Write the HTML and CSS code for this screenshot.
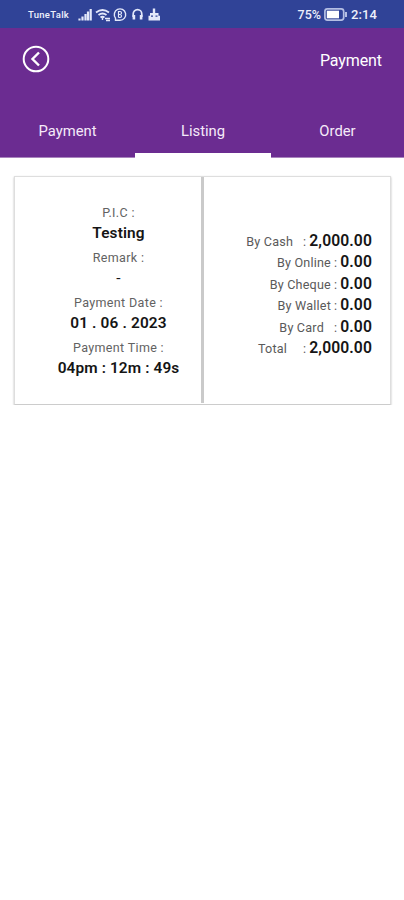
FILE: index.html
```html
<!DOCTYPE html>
<html lang="en">
<head>
<meta charset="utf-8">
<meta name="viewport" content="width=device-width, initial-scale=1">
<title>Payment</title>
<link rel="stylesheet" href="styles.css">
</head>
<body>
<div class="status">
  <span class="carrier">TuneTalk</span>
  <svg class="status-icons" width="84" height="16" viewBox="0 0 84 16" fill="none" stroke="#e3e8fa">
    <path d="M1.500 13.500v-2M4.500 13.500V9.500M7.500 13.500V7M10 13.500V4.500M12.700 13.500V2" stroke-width="2.200"/>
    <path d="M18 5.500q6.500-5 13 0M20.500 8q4-3 8 0M22.500 10.500q2-1.500 4 0" stroke-width="1.800"/>
    <path d="M24.500 10.500v2.500M27 11.500h5M28 13.500h4" stroke-width="1.400"/>
    <path d="M37.500 13.300H42a5.700 5.700 0 1 0-4.500-2.200z" stroke-width="1.400"/>
    <path d="M40.500 10.500v-6H42a1.500 1.500 0 0 1 0 3h-1.500M42 7.500a1.500 1.500 0 0 1 0 3h-1.500" stroke-width="1.200"/>
    <path d="M55.200 10V7a4.300 4.300 0 0 1 8.600 0v3" stroke-width="1.700"/>
    <path d="M55.900 8v4.500M63.100 8v4.500" stroke-width="2.600"/>
    <path d="M76 1.500v6" stroke-width="2.400"/>
    <path d="M72 6h8.500v3H72zM70.500 8.800h11.500v4.700H70.500z" fill="#e3e8fa" stroke="none"/>
    <path d="M73 9.200h2M77.500 9.200h2" stroke="#304397" stroke-width="1.300"/>
  </svg>
  <span class="percent">75%</span>
  <svg class="battery" width="24" height="13" viewBox="0 0 24 13">
    <rect x=".9" y=".9" width="18.800" height="11.200" rx="2.500" fill="none" stroke="#b5bfe3" stroke-width="1.700"/>
    <rect x="2.800" y="2.700" width="12.200" height="7.600" fill="#fff"/>
    <path d="M22 4v5" stroke="#b5bfe3" stroke-width="2"/>
  </svg>
  <span class="clock">2:14</span>
</div>
<header class="header">
  <div class="bar">
    <svg class="back" width="28" height="28" viewBox="0 0 28 28" fill="none" stroke="#fff" stroke-width="2">
      <circle cx="14" cy="14" r="12.300"/>
      <path d="M17 7.500 10.500 14l6.500 6.500" stroke-width="2.400"/>
    </svg>
    <h1 class="title">Payment</h1>
  </div>
  <nav class="tabs">
    <span class="tab">Payment</span>
    <span class="tab active">Listing</span>
    <span class="tab">Order</span>
  </nav>
</header>
<main class="card">
  <section class="details">
    <span class="label">P.I.C :</span>
    <b class="value">Testing</b>
    <span class="label">Remark :</span>
    <span class="value dash">-</span>
    <span class="label">Payment Date :</span>
    <b class="value date">01 . 06 . 2023</b>
    <span class="label">Payment Time :</span>
    <b class="value">04pm : 12m : 49s</b>
  </section>
  <div class="divider"></div>
  <section class="amounts">
    <div class="row"><span class="cash">By Cash</span><i>:</i><b>2,000.00</b></div>
    <div class="row"><span>By Online</span><i>:</i><b>0.00</b></div>
    <div class="row"><span>By Cheque</span><i>:</i><b>0.00</b></div>
    <div class="row"><span>By Wallet</span><i>:</i><b>0.00</b></div>
    <div class="row"><span class="credit">By Card</span><i>:</i><b>0.00</b></div>
    <div class="row"><span class="total">Total</span><i>:</i><b>2,000.00</b></div>
  </section>
</main>
</body>
</html>
```
FILE: styles.css
```css
* { box-sizing: border-box; }
body { margin: 0; background: #fff; font-family: Roboto, sans-serif; color: #151515; }
.status { height: 28px; background: #304397; color: #eef0fc; display: flex; align-items: center; padding: 1px 27px 0 28px; }
.carrier { width: 50px; font-size: 9.5px; letter-spacing: .3px; font-weight: 500; white-space: nowrap; }
.status-icons { flex: none; }
.percent { margin-left: auto; font-size: 12.5px; font-weight: 500; }
.battery { margin: 0 3px 0 3px; }
.clock { font-size: 13px; font-weight: 500; letter-spacing: .1px; }
.header { height: 130px; background: linear-gradient(#6b2c91 129px, #a884bd 129px); color: #fff; }
.bar { height: 76px; display: flex; align-items: flex-start; justify-content: space-between; padding: 17px 22px 0; }
.title { margin: 5px 0 0; font-size: 16px; font-weight: 400; line-height: 22px; letter-spacing: -.1px; }
.tabs { height: 54px; display: grid; grid-template-columns: 135px 136px 133px; }
.tab { display: flex; justify-content: center; padding-top: 17px; font-size: 14.8px; line-height: 20px; border-bottom: 5px solid transparent; color: #f5eaf9; }
.active { border-color: #fff; }
.card { margin: 18px 13px 0 14px; height: 229px; display: flex; border: 1px solid #dedede; border-bottom-color: #ccc; box-shadow: 0 1px 2px #bbb; }
.details { flex: 0 0 186px; padding: 26px 0 0 21px; display: flex; flex-direction: column; align-items: center; }
.label { height: 20px; line-height: 20px; font-size: 12.5px; letter-spacing: .35px; color: #626262; }
.value { height: 25px; line-height: 20px; font-size: 15.4px; font-weight: 600; letter-spacing: .12px; white-space: nowrap; }
.date { letter-spacing: .15px; }
.dash { font-weight: 400; }
.divider { width: 3px; height: 226px; background: #cacaca; }
.amounts { flex: 1; padding: 53px 18px 0 0; }
.row { display: flex; justify-content: flex-end; align-items: baseline; height: 21.4px; line-height: 21px; font-size: 12.6px; letter-spacing: .2px; color: #5a5a5a; }
.row i { font-style: normal; margin: 0 3px; }
.row b { font-size: 15.7px; font-weight: 600; letter-spacing: .1px; color: #151515; }
.cash { margin-right: 7px; }
.credit { margin-right: 7px; }
.total { margin-right: 13px; }
```
